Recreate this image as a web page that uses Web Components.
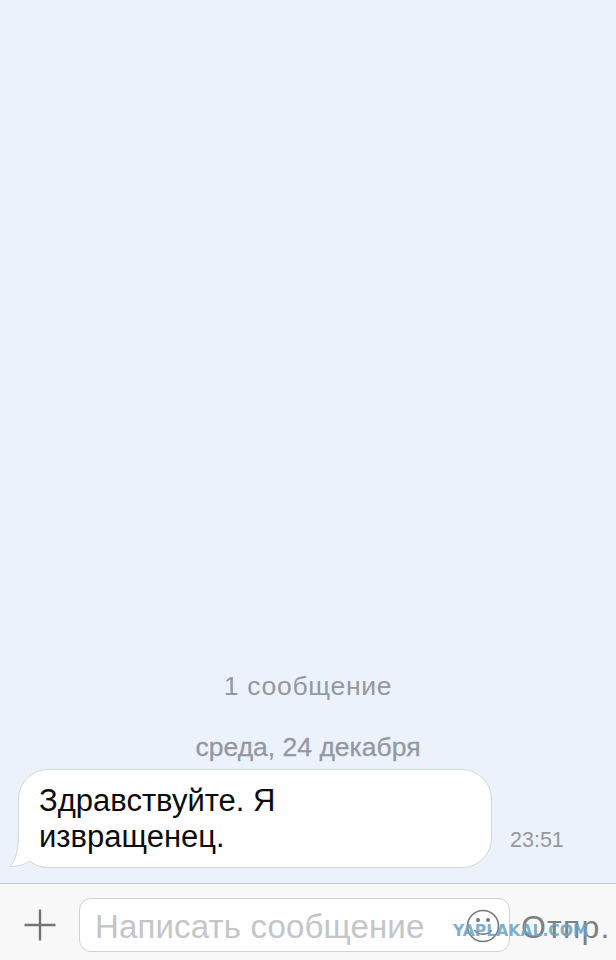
<!DOCTYPE html>
<html lang="ru">
<head>
<meta charset="utf-8">
<title>Чат</title>
<style>
  html, body { margin: 0; padding: 0; }
  body { width: 616px; height: 960px; overflow: hidden; font-family: "Liberation Sans", Arial, sans-serif; }
</style>
</head>
<body>
<chat-screen>
  <chat-note slot="messages" size="26.5" top="0" bottom="0" spacing="0.7">1 сообщение</chat-note>
  <chat-note slot="messages" size="26.5" top="33" bottom="8" stroke="0.3">среда, 24 декабря</chat-note>
  <chat-bubble slot="messages" time="23:51">Здравствуйте. Я<br>извращенец.</chat-bubble>
  <chat-input slot="footer" placeholder="Написать сообщение" send="Отпр."></chat-input>
</chat-screen>

<script>
class ChatScreen extends HTMLElement {
  constructor() {
    super().attachShadow({ mode: "open" }).innerHTML = `
    <style>
      :host {
        display: flex;
        flex-direction: column;
        width: 616px;
        height: 960px;
        background: #ecf2fb;
      }
      .messages {
        flex: 1;
        display: flex;
        flex-direction: column;
        justify-content: flex-end;
        padding-bottom: 15px;
      }
    </style>
    <div class="messages"><slot name="messages"></slot></div>
    <slot name="footer"></slot>
    `;
  }
}
customElements.define("chat-screen", ChatScreen);

class ChatNote extends HTMLElement {
  constructor() {
    super().attachShadow({ mode: "open" }).innerHTML = `
    <style>
      :host {
        display: block;
        text-align: center;
        color: #94989f;
        line-height: 28px;
      }
    </style>
    <slot></slot>
    `;
  }
  connectedCallback() {
    this.style.fontSize = this.getAttribute("size") + "px";
    this.style.marginTop = this.getAttribute("top") + "px";
    this.style.marginBottom = this.getAttribute("bottom") + "px";
    const spacing = this.getAttribute("spacing");
    if (spacing) this.style.letterSpacing = spacing + "px";
    const stroke = this.getAttribute("stroke");
    if (stroke) this.style.webkitTextStroke = stroke + "px #94989f";
  }
}
customElements.define("chat-note", ChatNote);

class ChatBubble extends HTMLElement {
  constructor() {
    super().attachShadow({ mode: "open" }).innerHTML = `
    <style>
      :host {
        display: flex;
        align-items: flex-end;
        padding-left: 18px;
      }
      .bubble {
        position: relative;
        box-sizing: border-box;
        width: 474px;
        height: 99px;
        padding: 13px 20px 0 20px;
        background: #fff;
        border: 1px solid #d3d6dc;
        border-radius: 30px;
        color: #0c0c0c;
        font-size: 31px;
        line-height: 36px;
      }
      .text {
        position: relative;
        display: block;
      }
      .tail {
        position: absolute;
        left: -10px;
        bottom: -1px;
        width: 36px;
        height: 34px;
      }
      .time {
        margin: 0 0 16px 18px;
        color: #94989f;
        font-size: 21.5px;
        line-height: 24px;
      }
    </style>
    <div class="bubble">
      <svg class="tail" viewBox="0 0 36 34">
        <path d="M9.5 1 C9.5 14 7 27 0.8 32.5 C8 32.5 15 31 21 27 C25 30.5 30 33 36 33 L36 1 Z" fill="#fff"/>
        <path d="M9.5 1 C9.5 14 7 27 0.8 32.5 C8 32.5 15 31 21 27 C25 30.5 30 33 36 33" fill="none" stroke="#d3d6dc"/>
      </svg>
      <span class="text"><slot></slot></span>
    </div>
    <div class="time"></div>
    `;
  }
  connectedCallback() {
    this.shadowRoot.querySelector(".time").textContent = this.getAttribute("time");
  }
}
customElements.define("chat-bubble", ChatBubble);

class ChatInput extends HTMLElement {
  constructor() {
    super().attachShadow({ mode: "open" }).innerHTML = `
    <style>
      :host {
        display: flex;
        position: relative;
        align-items: center;
        box-sizing: border-box;
        height: 77px;
        padding: 6px 6px 0 24px;
        background: #f8f8f9;
        border-top: 1px solid #c9c8cc;
      }
      .plus { width: 32px; height: 32px; flex: none; }
      .field {
        flex: none;
        display: flex;
        align-items: center;
        justify-content: space-between;
        box-sizing: border-box;
        width: 431px;
        height: 54px;
        padding: 0 9px 0 15px;
        margin-left: 23px;
        background: #fff;
        border: 1px solid #d0d1d5;
        border-radius: 12px;
        color: #c4c5c9;
        font-size: 33px;
        letter-spacing: 0.15px;
        white-space: nowrap;
      }
      .placeholder { padding-top: 4px; }
      .smile { width: 34px; height: 34px; flex: none; margin-top: 1px; }
      .send {
        margin-left: 11px;
        padding-top: 4px;
        color: #7f8084;
        font-size: 32px;
        letter-spacing: 1.2px;
        white-space: nowrap;
      }
      .mark {
        position: absolute;
        left: 453px;
        top: 39px;
        color: rgba(105, 160, 196, 0.85);
        font-family: "DejaVu Sans", sans-serif;
        font-size: 15.6px;
        font-weight: 700;
        line-height: 16px;
        white-space: nowrap;
      }
    </style>
    <svg class="plus" viewBox="0 0 32 32" fill="none" stroke="#737478" stroke-width="2.4">
      <path d="M0.5 16 H31.5 M16 0.5 V31.5"/>
    </svg>
    <div class="field">
      <span class="placeholder"></span>
      <svg class="smile" viewBox="0 0 34 34" fill="none">
        <circle cx="17" cy="17" r="15.5" stroke="#75767a" stroke-width="1.6"/>
        <circle cx="12" cy="11" r="2" fill="#75767a"/>
        <circle cx="22" cy="11" r="2" fill="#75767a"/>
        <path d="M8.5 21 C11 26.5 23 26.5 25.5 21" stroke="#75767a" stroke-width="1.6"/>
      </svg>
    </div>
    <span class="send"></span>
    <span class="mark">YAPLAKAL.COM</span>
    `;
  }
  connectedCallback() {
    const { shadowRoot } = this;
    shadowRoot.querySelector(".placeholder").textContent = this.getAttribute("placeholder");
    shadowRoot.querySelector(".send").textContent = this.getAttribute("send");
  }
}
customElements.define("chat-input", ChatInput);
</script>
</body>
</html>
